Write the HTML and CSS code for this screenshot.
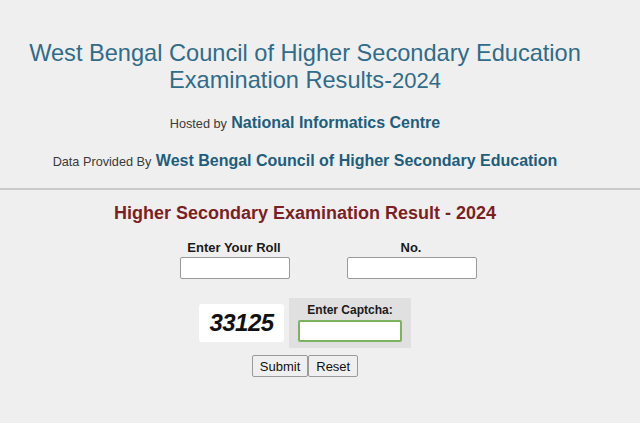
FILE: index.html
```html
<!DOCTYPE html>
<html>
<head>
<meta charset="utf-8">
<link rel="stylesheet" href="styles.css">
</head>
<body>
<div class="wrap">
  <h1 class="title">West Bengal Council of Higher Secondary Education<br>Examination Results-<span class="yr">2024</span></h1>
  <p class="credit hosted"><span class="sm">Hosted by</span> <b>National Informatics Centre</b></p>
  <p class="credit data"><span class="sm">Data Provided By</span> <b>West Bengal Council of Higher Secondary Education</b></p>
</div>
<div class="rule"></div>
<div class="wrap">
  <h2 class="result">Higher Secondary Examination Result - 2024</h2>
  <div class="roll">
    <div class="cell"><label class="lbl">Enter Your Roll</label><input class="inp inp-a" type="text"></div>
    <div class="cell"><label class="lbl">No.</label><input class="inp inp-b" type="text"></div>
  </div>
  <div class="captcha">
    <div class="code">33125</div>
    <div class="cbox">
      <label class="clbl">Enter Captcha:</label>
      <input class="cinp" type="text">
    </div>
  </div>
  <div class="btns">
    <button class="btn">Submit</button><button class="btn">Reset</button>
  </div>
</div>
</body>
</html>
```
FILE: styles.css
```css
html, body {
  margin: 0;
  padding: 0;
  background: #efefef;
  font-family: "Liberation Sans", Arial, sans-serif;
  width: 640px;
  height: 423px;
  overflow: hidden;
}
.wrap {
  width: 610px;
  text-align: center;
}
.title {
  margin: 40px 0 0;
  font-weight: normal;
  font-size: 23.6px;
  line-height: 27px;
  color: #2f6c8a;
}
.title .yr {
  font-size: 22px;
}
.credit {
  margin: 0;
  line-height: 20px;
}
.hosted {
  margin-top: 19px;
}
.data {
  margin-top: 17px;
}
.credit .sm {
  font-size: 12.7px;
  color: #3a3a3a;
}
.credit b {
  font-size: 16px;
  color: #1d5e7c;
}
.rule {
  margin-top: 16px;
  height: 0;
  border-top: 2px solid #cacaca;
}
.result {
  margin: 12px 0 0;
  font-size: 18px;
  line-height: 22px;
  color: #7a1f24;
}
.roll {
  display: grid;
  grid-template-columns: 150px 150px;
  column-gap: 27px;
  justify-content: center;
  padding-left: 37px;
  margin-top: 16px;
}
.cell {
  display: flex;
  flex-direction: column;
  align-items: center;
}
.lbl {
  font-size: 13px;
  font-weight: bold;
  color: #1a1a1a;
  line-height: 16px;
  margin-left: -2px;
}
.inp {
  box-sizing: border-box;
  height: 22px;
  margin-top: 1px;
  border: 1px solid #9a9a9a;
  border-radius: 2px;
  background: #fff;
  padding: 0;
}
.inp-a { width: 110px; }
.inp-b { width: 130px; }
.captcha {
  display: flex;
  justify-content: center;
  align-items: center;
  gap: 5px;
  margin-top: 19px;
}
.code {
  box-sizing: border-box;
  width: 85px;
  height: 38px;
  background: #fff;
  border-radius: 3px;
  font-size: 24px;
  font-weight: bold;
  font-style: italic;
  line-height: 38px;
  color: #111;
  letter-spacing: -0.5px;
}
.cbox {
  box-sizing: border-box;
  width: 122px;
  height: 50px;
  background: #e0e0e0;
  display: flex;
  flex-direction: column;
  align-items: center;
  padding-top: 5px;
}
.clbl {
  font-size: 12px;
  font-weight: bold;
  color: #1a1a1a;
  line-height: 14px;
}
.cinp {
  box-sizing: border-box;
  width: 104px;
  height: 22px;
  margin-top: 3px;
  border: 2px solid #7db25e;
  border-radius: 2px;
  background: #fff;
  padding: 0;
}
.btns {
  display: flex;
  justify-content: center;
  margin-top: 7px;
}
.btn {
  box-sizing: border-box;
  height: 22px;
  padding: 0 7px;
  font-family: "Liberation Sans", Arial, sans-serif;
  font-size: 13px;
  color: #111;
  background: #efefef;
  border: 1px solid #9a9a9a;
  border-radius: 2px;
  margin: 0;
}
```
